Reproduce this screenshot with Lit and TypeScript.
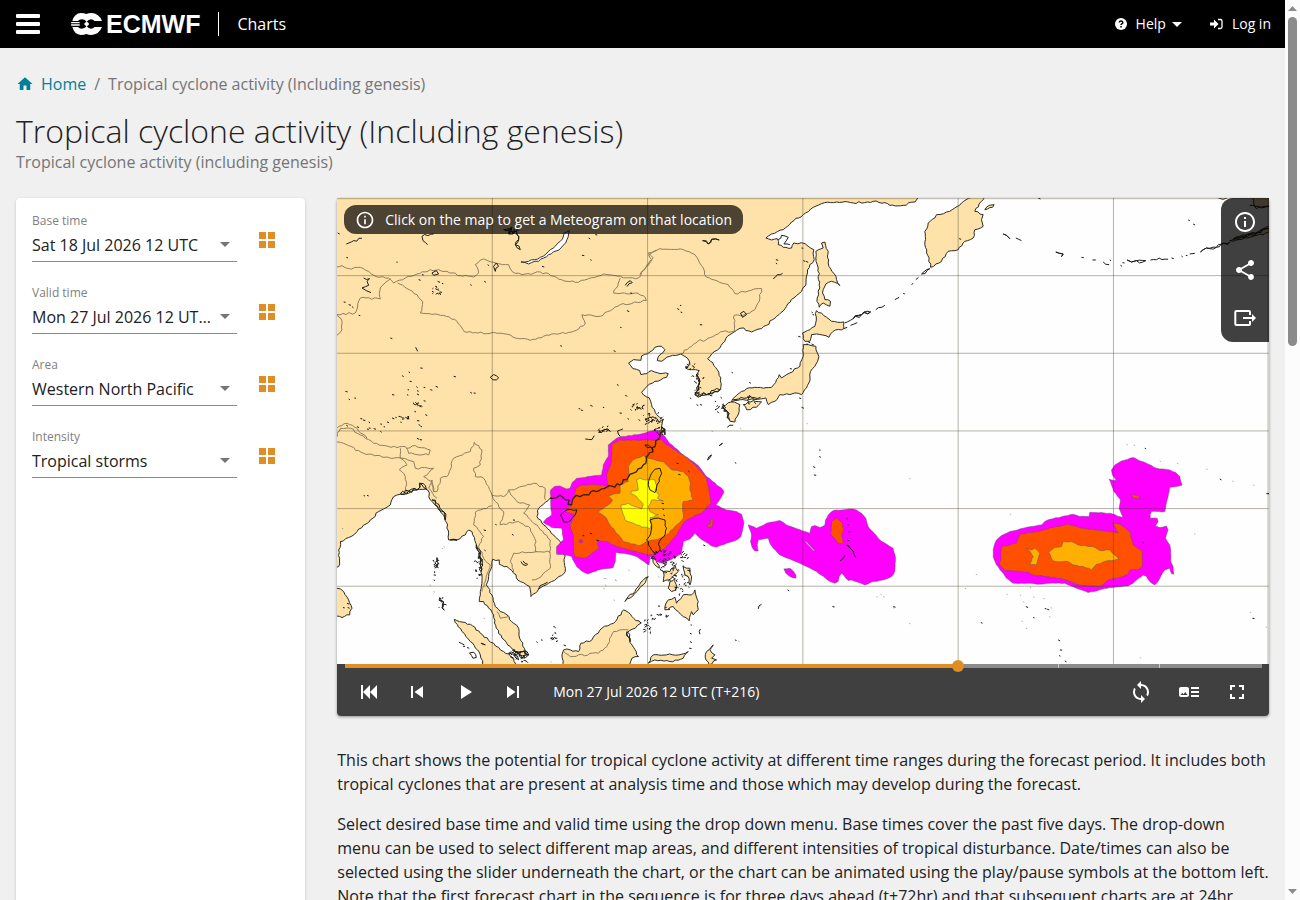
import { LitElement, html, css, svg } from "lit";
import { customElement, state } from "lit/decorators.js";

type Pt = [number, number];

/** Parses "x,y x,y" and moves it by the origin of its map sheet. */
const at = (dx: number, dy: number, s: string): Pt[] =>
  s.trim().split(/\s+/).map((p) => {
    const [x, y] = p.split(",").map(Number);
    return [x + dx, y + dy] as Pt;
  });

const noise = (a: number, b: number, c: number) => {
  const h = Math.sin(a * 12.9 + b * 7.3 + c * 78.2) * 43758.5;
  return (h - Math.floor(h) - 0.5) * 2;
};

/** Adds small deterministic irregularities between the points of a coast. */
const rough = (pts: Pt[], amp = 3, closed = true): string => {
  const out: string[] = [];
  const n = closed ? pts.length : pts.length - 1;
  for (let i = 0; i < n; i++) {
    const [x0, y0] = pts[i];
    const [x1, y1] = pts[(i + 1) % pts.length];
    const len = Math.hypot(x1 - x0, y1 - y0);
    out.push(`${x0},${y0}`);
    const k = len > 400 ? 0 : Math.floor(len / 8);
    for (let j = 1; j < k; j++) {
      const t = j / k;
      const r = noise(x0, y0, j) * amp;
      out.push(
        `${(x0 + (x1 - x0) * t - ((y1 - y0) / len) * r).toFixed(1)},${(y0 + (y1 - y0) * t + ((x1 - x0) / len) * r).toFixed(1)}`
      );
    }
  }
  if (!closed) out.push(pts[pts.length - 1].join(","));
  return "M" + out.join("L") + (closed ? "Z" : "");
};

/** Scatters n islets around each centre. */
const scatter = (centres: Pt[], n: number, rx: number, ry: number) =>
  centres
    .map(([x, y]) =>
      Array.from({ length: n }, (_, i) => {
        const px = x + noise(x, y, i) * rx;
        const py = y + noise(y, x, i + 5) * ry;
        return `M${px.toFixed(1)} ${py.toFixed(1)}l${(noise(px, py, 1) * 6).toFixed(1)} ${(noise(px, py, 2) * 5).toFixed(1)}l${(noise(px, py, 3) * 5).toFixed(1)} 2`;
      }).join("")
    )
    .join("");

const NE = [909, 0] as const;
const FE = [1839, 0] as const;
const SW = [0, 681] as const;
const SC = [609, 681] as const;
const SE = [1839, 681] as const;

const southChina = at(...SC, "375,12 362,22 360,35 345,65 325,90 310,120 280,145 240,180 200,187 170,200 130,210 100,220 95,240 84,238 88,225 60,210 30,220");

const mainland: Pt[] = [
  ...at(0, 0, "-9,-9"),
  ...at(...NE, "835,-9 825,12 790,22 750,22 735,14 700,10 640,15 590,12 545,17 520,28 490,50 455,72 430,95 395,108 378,120 395,126 412,122 415,140 430,148 455,150 462,135 485,134 505,145 522,155 523,185 510,200 503,225 498,262 485,280 462,300 440,325 410,355 380,382 365,392 335,402 318,398 312,390 290,397 270,410 255,430 240,450 215,468 203,482 212,490 232,515 243,540 242,575 225,582 195,592 175,598 165,590 175,575 178,550 170,530 178,518 155,515 137,510 150,500 142,480 122,468 90,475 65,490 52,488 60,470 75,455 65,445 45,448 30,462 5,474"),
  ...at(0, 0, "912,487 890,485 875,495 888,512 908,518 912,530 930,527"),
  ...at(...NE, "35,518 60,527 85,527 80,538 45,550 15,572 5,583 28,600 35,620 50,650 68,665 65,690"),
  ...southChina,
  ...at(...SW, "625,232 605,250 600,275 620,300 650,330 670,350 682,385 685,440 660,460 635,475 605,492 582,515 578,485 550,470 530,445 510,425 487,418 487,405 467,403 465,425 455,455 448,480 465,510 475,545 490,560 510,570 530,595 545,610 548,640 562,670 568,690 545,690 520,665 495,640 478,610 470,570 455,550 440,530 427,530 430,500 435,450 430,400 420,365 405,320 395,315 385,330 360,345 335,345 332,300 320,270 300,245 280,225 272,195 240,195 215,205 190,208 170,215 160,240 125,260 100,285 60,320 35,338 10,350 5,375 8,400 5,425 -9,430"),
];

const taiwan = at(...SC, "325,180 335,145 345,133 360,130 365,145 358,170 345,203 330,195");
const luzon = at(...SC, "330,285 345,280 375,285 380,310 372,335 358,350 360,375 345,385 335,375 320,345 328,335 335,300");
const hainan = at(...SW, "670,270 690,255 720,255 715,270 700,288 680,291");

const islands: Pt[][] = [
  taiwan,
  luzon,
  hainan,
  at(...SW, "-9,485 10,492 20,500 35,525 45,550 38,570 15,578 -9,572"),
  at(...SW, "352,583 400,598 430,625 470,655 500,680 530,700 545,735 445,735 430,690 400,650 375,620"),
  at(...SW, "675,690 680,675 700,675 725,680 732,655 765,645 795,610 830,595 860,555 885,575 912,595 895,610 870,625 885,660 905,695 885,700 870,735 680,735"),
  at(...SC, "325,715 340,690 380,690 425,688 445,680 430,700 390,710 345,705"),
  at(...SC, "500,680 520,660 510,675 525,690 515,700 530,705 508,720 498,705"),
  at(...SC, "375,545 385,525 405,517 410,535 430,510 455,510 465,495 475,530 475,555 460,570 455,560 448,588 430,575 415,560 400,545 375,555"),
  at(...SC, "430,425 450,430 455,455 450,480 445,455 435,450"),
  at(...SC, "370,440 390,440 405,420 415,440 395,460 370,470"),
  at(...SC, "390,470 405,460 410,490 395,500 385,490"),
  at(...SC, "335,395 350,405 358,430 345,420"),
  at(...SC, "255,530 265,515 285,500 315,460 325,455 310,480 285,505"),
  at(...NE, "490,440 505,440 528,445 537,475 525,505 512,520 507,555 500,570 485,590 465,585 450,590 420,590 405,610 385,620 378,600 345,605 310,605 275,612 285,597 320,572 395,568 410,545 418,530 425,540 450,525 480,505 490,475"),
  at(...NE, "310,620 340,608 365,612 350,628 320,635"),
  at(...NE, "248,625 275,612 300,620 298,640 285,672 270,670 262,640"),
  at(...NE, "530,338 545,345 575,370 612,372 612,392 580,400 567,418 530,408 515,410 510,430 495,430 488,405 510,395 525,385"),
  at(...NE, "545,135 555,132 565,160 565,195 590,245 600,263 575,250 558,258 548,285 555,305 572,310 570,325 550,315 538,328 532,300 540,270 535,210 528,180 528,160 550,150"),
  at(...NE, "855,100 865,75 885,60 890,50 920,42 945,30 965,15 1000,-9 1040,-9 1030,5 1005,40 1030,50 1025,65 1030,85 1005,95 1000,120 975,130 955,155 925,160 905,190 872,208 868,180 855,140"),
  at(...FE, "905,-9 970,-9 970,30 945,25 920,32 912,15"),
  at(...FE, "795,-9 840,-9 820,4"),
  at(...FE, "840,128 870,115 920,105 957,85 970,100 900,118 860,126"),
  at(...FE, "105,35 118,22 133,20 128,28"),
];

const baikal = at(0, 0, "552,192 575,190 610,178 640,155 670,130 682,105 697,98 690,125 672,150 635,170 605,190 575,198");

const borders: Pt[][] = [
  at(0, 0, "-9,212 15,203 35,212 70,208 95,220 120,237 155,240 170,255 205,240 240,228 280,215 330,220 370,233 410,237 425,225 415,200 440,183 470,193 515,200 525,220 555,230 610,222 650,235 690,250 715,253 760,240 800,228 830,232 860,240 905,240 920,215 945,185 935,170 960,157"),
  at(0, 0, "182,255 210,272 240,290 257,310 250,345 320,352 360,370 383,402 505,408 545,422 580,427 620,415 710,400 745,378 735,350 790,355 850,320 928,308 925,298 895,285 830,285 850,240"),
  at(0, 0, "160,243 130,270 130,303 70,300 55,345 0,350 15,370 15,395 -5,415"),
  at(...NE, "0,230 20,205 40,180 25,165 60,152 130,155 165,170 190,210 200,238 265,260 285,287 365,272 360,300 345,335 310,352 283,352 283,400 250,400 190,430 180,425 122,468"),
  at(...SW, "-5,40 10,10 40,10 70,30 110,55 180,68 205,65 215,85 275,90 280,75 235,62 210,70"),
  at(...SW, "-5,45 80,85 160,100 195,100 230,110 235,130 290,130 260,155 285,170 290,200"),
  at(...SW, "0,10 30,-5 60,10 90,40"),
  at(...SW, "190,70 190,100 210,120 187,135 205,155 208,205"),
  at(...SW, "300,220 275,190 285,165 290,200 300,200 310,160 330,155 350,100 400,80 412,52 435,75 430,120 410,130 415,155 440,160 455,185 465,210 500,215 515,195 540,190 590,175 625,190 625,225"),
  at(...SW, "465,243 415,262 410,300 440,335 425,365 440,400 460,420 435,500"),
  at(...SW, "465,210 475,230 500,260 490,300 545,290 580,310 597,350 595,380 640,382"),
  at(...SW, "515,195 540,230 578,240 560,265 600,300 640,345 640,430 605,460 585,465"),
  at(...SW, "530,445 520,410 530,385 600,380"),
  at(...SW, "680,680 700,695 785,685 810,665 830,620 875,615"),
  at(...SW, "480,560 490,580 515,575"),
];

const magenta: Pt[][] = [
  at(...SC, "230,40 240,36 300,28 345,15 362,20 375,35 385,50 430,90 475,122 500,155 550,195 552,203 545,215 528,240 560,255 590,260 605,268 612,295 603,335 590,345 560,355 530,367 515,363 495,350 480,340 465,325 450,342 430,350 425,385 400,400 370,415 350,410 330,395 327,420 290,395 260,387 228,382 226,410 220,428 175,435 143,447 125,438 110,425 95,395 75,390 50,388 50,365 70,345 65,310 35,308 10,292 20,280 35,270 32,230 32,195 45,184 60,183 80,192 90,190 97,172 110,160 185,150 190,120 205,95 205,60"),
  at(...SC, "625,300 635,303 650,310 680,295 720,287 740,300 810,325 815,305 825,302 840,308 855,300 857,285 865,270 880,257 930,252 950,255 965,265 978,280 985,305 1020,345 1060,370 1067,400 1065,440 1055,455 1030,465 1000,470 975,480 955,472 935,465 925,467 905,445 898,455 895,470 885,475 870,470 830,440 780,415 720,390 700,370 690,355 685,340 655,345 652,360 655,378 645,378 638,370 632,350 635,330"),
  at(...SC, "732,432 750,430 760,438 768,450 768,460 750,455 738,445"),
  at(...SE, "130,375 133,362 140,345 155,332 180,320 220,310 275,300 285,290 300,283 370,268 390,275 418,275 420,262 480,265 520,278 508,250 512,225 492,200 485,180 478,163 500,167 488,150 485,135 495,120 515,108 550,98 590,115 620,130 640,132 660,135 678,143 690,155 697,180 680,185 660,187 655,215 645,260 605,260 601,270 602,280 622,280 625,290 617,303 630,308 650,303 655,315 647,340 660,360 663,375 663,410 670,425 672,448 665,446 660,430 645,435 635,450 625,470 615,480 600,470 590,455 580,450 560,465 550,475 535,483 480,488 415,503 380,490 345,475 300,475 270,478 240,475 190,475 170,460 155,440 140,420 130,395"),
];
const red: Pt[][] = [
  at(...SC, "215,60 240,45 330,45 365,45 380,60 430,90 470,125 500,160 508,200 513,235 490,260 450,280 430,295 410,330 375,370 350,385 325,390 290,380 230,365 200,350 170,345 178,370 150,390 135,400 105,395 100,370 100,330 90,300 105,270 75,260 95,240 108,190 125,180 190,180 205,190 200,150 215,110"),
  at(...SC, "500,300 511,298 513,280 519,282 517,305 503,307"),
  at(...SC, "875,290 890,280 908,295 910,320 905,330 910,357 895,355 872,325"),
  at(...SE, "155,365 200,355 210,328 280,315 350,298 400,310 505,323 488,293 510,297 540,320 550,360 578,380 577,425 565,435 540,435 535,448 520,455 475,465 450,485 390,480 330,460 250,450 235,441 165,437 150,420 153,395"),
  at(...SE, "545,207 565,212 572,222 550,220"),
];
const orange: Pt[][] = [
  at(...SC, "265,125 275,110 290,100 310,92 340,103 370,110 395,135 430,140 445,155 452,175 450,195 460,225 430,230 430,280 410,300 380,330 345,345 320,350 300,362 250,350 230,325 210,300 200,280 175,262 205,240 218,225 205,212 240,205 240,180 265,170"),
  at(...SE, "297,383 315,367 335,365 340,350 365,350 385,360 430,365 450,377 480,375 507,402 495,405 470,408 440,418 425,435 400,425 370,420 355,410 310,408"),
  at(...SE, "230,370 245,375 255,370 270,385 265,400 260,420 240,418 250,395 240,378"),
];
const yellow: Pt[][] = [
  at(...SC, "290,165 300,160 320,165 345,165 352,185 345,195 358,210 352,220 370,228 335,225 325,245 330,260 355,270 330,278 335,295 330,312 290,300 255,285 248,262 243,240 265,235 285,245 305,252 310,238 290,215 272,205 275,198 295,195"),
];

const strokes: Pt[][] = [
  at(0, 0, "28,138 50,128 75,121"),
  at(0, 0, "290,108 255,115 258,128 272,140"),
  at(0, 0, "80,240 98,242 90,250 95,262 75,270 88,278 102,284"),
  at(0, 0, "285,225 298,218 305,228 290,232 285,225"),
  at(0, 0, "470,205 478,195 485,205 475,220 470,205"),
  at(0, 0, "460,538 470,530 485,540 478,546 460,538"),
  at(0, 0, "865,262 880,248 886,254 870,266"),
  at(0, 0, "236,448 242,460"),
  at(...NE, "400,242 412,230 428,226"),
  at(...NE, "302,346 312,340 320,350 308,358 302,346"),
  at(...NE, "415,125 425,112 445,118 432,138 450,140"),
  at(...NE, "615,375 640,362 665,350 692,342"),
  at(...NE, "612,392 622,388"),
  at(...NE, "632,382 652,374"),
  at(...NE, "708,335 735,322"),
  at(...NE, "765,305 778,298"),
  at(...NE, "815,260 820,256"),
  at(...NE, "828,245 836,238"),
  at(...NE, "225,636 240,625"),
  at(...NE, "262,688 280,682"),
  at(...NE, "280,605 320,600 362,598"),
  at(...FE, "198,120 215,128"),
  at(...FE, "428,186 438,186"),
  at(...FE, "460,192 478,200"),
  at(...FE, "602,186 628,180 655,184"),
  at(...FE, "720,168 735,166"),
  at(...FE, "900,22 935,30 957,24"),
  at(...SW, "745,42 765,44 772,32"),
  at(...SW, "850,35 842,18 858,12"),
  at(...SW, "366,652 382,660"),
  at(...SW, "398,684 410,682 418,698 408,700 398,684"),
  at(...SW, "552,410 568,422 572,418 558,408"),
  at(...SW, "605,492 620,478 632,472"),
  at(...SC, "655,552 665,538"),
  at(...SC, "480,628 482,612"),
  at(...SC, "900,408 915,390"),
  at(...SC, "920,360 940,378 948,398"),
];

/** Dense coasts and archipelagos, traced twice so that they read as broken ground. */
const dense: Pt[][] = [
  at(0, 0, "500,95 525,88 515,108 538,100 545,125 535,140 550,155"),
  at(...NE, "188,128 205,138 215,124 238,126"),
  at(...NE, "640,362 665,350 692,342"),
  at(...NE, "845,228 870,212"),
  at(...NE, "165,590 200,590 240,575"),
  at(...NE, "170,530 180,550 172,580"),
  at(...NE, "248,625 262,640 268,665"),
  at(...FE, "160,108 170,112 180,122"),
  at(...FE, "318,162 340,168 335,176"),
  at(...FE, "532,186 545,192 560,188 588,188"),
  at(...FE, "752,162 770,150 800,148 840,132"),
  at(...FE, "850,124 900,110 957,92"),
  at(...SW, "785,22 800,15 812,12 820,20"),
  at(...SW, "190,206 215,198 240,195 248,175 268,192"),
  at(...SW, "300,398 295,430"),
  at(...SW, "308,518 318,540 322,556"),
  at(...SW, "432,655 445,660"),
  at(...SW, "515,685 540,680 555,700 575,690 560,680 530,690 545,705"),
  at(...SW, "285,225 320,260 325,285"),
  at(...SW, "418,360 430,400 432,440"),
  at(...SW, "340,345 360,346"),
  at(...SW, "870,620 880,650"),
  at(...SC, "503,105 515,90"),
  at(...SC, "538,62 548,55"),
  at(...SC, "315,60 340,75"),
  at(...SC, "365,5 375,30"),
];

const specks: Pt[] = [
  ...at(0, 0, "178,192 28,178 2,105 735,172 760,185 755,120 775,110 615,205 452,200 255,230 245,245 302,250 315,256 285,280 295,272 308,282 400,260 442,250 20,312 35,320 45,326 65,352 160,420 870,338 850,388 670,443 830,458 250,510 215,522 195,533 218,550 350,535 238,566 260,568 280,575 296,565 212,575 240,578 240,588 165,590 210,590 400,583 410,585 25,580 35,603 52,600 260,608 230,618 238,620 232,640 265,650 240,668 245,680 250,684 70,662 78,666 95,672 130,678 150,672 165,660 175,658 190,656 205,658 210,662 190,672 28,682 95,690 110,692 130,700 725,632 732,636 760,622 798,628 840,560 865,592 848,645 872,662 905,665 880,285"),
  ...at(...NE, "408,185 408,195 485,150 490,188 498,190 120,322 122,342 112,332 180,380 275,523 328,553 450,512 475,415 515,342 518,350 505,432 515,438 500,438 790,286 5,630 70,695 150,600 170,620 180,620 210,592 242,598 248,622 478,600 485,628 225,610"),
  ...at(...FE, "715,66 730,78 395,178 480,186 512,202 518,194 665,180 695,174 708,172 28,122 265,0"),
  ...at(...SW, "80,212 90,211 240,40 248,44 475,298 525,328 528,285 440,315 442,375 18,548 32,548 30,535 140,5 90,12 60,5 290,450 290,465 305,525 378,664 390,668 598,650 612,645 640,640 680,660"),
  ...at(...SC, "838,75 838,95 820,125 822,150 585,113 743,495 878,545 1060,545 920,280 922,300 925,320 922,345 924,365 585,645 490,360 365,235 368,252 370,270 410,115 415,148 445,138 128,332 150,325 170,345 452,600 450,625 450,650 448,670"),
  ...at(...SE, "585,70 810,162 950,206 953,205 578,352 285,551 292,553 228,545 250,578 93,593 325,645 330,675 328,692 345,708 908,580"),
];
const faint: Pt[] = [
  ...at(...SE, "530,58 552,60 630,108 682,115 770,132 848,168 733,326 910,180 180,267 45,490 78,448 240,487 210,510 170,508 250,516 220,530 280,520 298,575 303,548 228,610 215,588 900,562 948,606 570,698"),
  ...at(...SC, "1010,515 1030,515 1022,508 1108,595 1060,548 878,545 595,648 515,18 225,465 190,490 195,460 195,480 800,-5 1108,160 265,435 355,455 600,10"),
  ...at(...SW, "315,370 320,365 278,480 290,500 640,710 835,465 800,460 15,310 440,580 830,525"),
];

const lines = (set: Pt[][], amp: number, closed = true) => set.map((p) => rough(p, amp, closed)).join("");

const chart = svg`
  <rect width="2796" height="1398" fill="#fefefe"/>
  <g stroke-linejoin="round">
    <path class="land" d=${rough(mainland, 3)}/>
    <path class="land" d=${lines(islands, 3)}/>
    <path class="lake" d=${rough(baikal, 3)}/>
    <path class="border" d=${lines(borders, 3, false)}/>
    <path fill="#ff00ff" class="contour" d=${lines(magenta, 1)}/>
    <path fill="#ff5000" class="contour" d=${lines(red, 1.5)}/>
    <path fill="#ffaf00" class="contour" d=${lines(orange, 2)}/>
    <path fill="#ffff00" class="contour" d=${lines(yellow, 2)}/>
    <path fill="#ff00ff" class="contour" d="M727 1026h9v8h-9z"/>
    <path fill="#ffffff" class="contour" d="M1403 1030l6 2 26 28-6-2z"/>
    <path class="over" d=${rough(southChina, 6, false)}/>
    <path class="isles" d=${lines([taiwan, luzon, hainan], 3)}/>
    <path class="isles" d=${lines(strokes, 4, false)}/>
    <path class="isles" d=${lines(dense, 7, false) + lines(dense.map((p) => p.slice().reverse()), 6, false)}/>
    <path class="isles" d=${scatter(at(...SC, "355,392 395,390 420,398 385,420"), 12, 22, 14)}/>
    <path class="isles" d=${scatter(at(...SC, "380,435 400,455 430,470 430,440 320,600 345,578 420,490 375,560"), 7, 20, 16)}/>
    <path class="isles" d=${scatter(at(...SW, "297,420 425,400 425,440 313,535 655,628 560,690 530,690 935,600"), 8, 8, 20)}/>
    <path class="isles" d=${scatter(at(...NE, "170,580 175,540 150,500 240,630 330,605 40,655 60,665 55,700 25,660"), 8, 14, 12)}/>
    <path class="isles" d=${scatter(at(0, 0, "895,628 905,625 938,668 800,692 525,100 295,278 200,660 240,618"), 7, 14, 9)}/>
    <path class="isles" d=${specks.map(([x, y], i) => `M${x} ${y}l${4 + (i % 4)} ${(i % 3) + 1}`).join("")}/>
    <path class="isles faint" d=${faint.map(([x, y]) => `M${x} ${y}l4 2`).join("")}/>
  </g>
  <path class="grid" d="M466 0V1398M932 0V1398M1398 0V1398M1864 0V1398M2330 0V1398M2794 0V1398M0 2H2796M0 233H2796M0 466H2796M0 699H2796M0 932H2796M0 1165H2796"/>`;

const icons = {
  home: "M10 20v-6h4v6h5v-8h3L12 3 2 12h3v8z",
  first: "M4 5h2v14H4zM13 5v14L6 12zM20 5v14l-7-7z",
  prev: "M6 6h2v12H6zm3.5 6l8.5 6V6z",
  play: "M8 5v14l11-7z",
  next: "M6 18l8.500-6L6 6v12zM16 6v12h2V6z",
  sync: "M12 4V1L8 5l4 4V6c3.310 0 6 2.690 6 6 0 1.010-.25 1.970-.7 2.800l1.460 1.460C19.540 15.030 20 13.570 20 12c0-4.420-3.580-8-8-8zm0 14c-3.310 0-6-2.690-6-6 0-1.010.25-1.970.7-2.800L5.240 7.740C4.460 8.970 4 10.430 4 12c0 4.420 3.580 8 8 8v3l4-4-4-4v3z",
  legend: "M22 13h-8v-2h8v2zm0-6h-8v2h8V7zm-8 10h8v-2h-8v2zm-2-8v6c0 1.100-.9 2-2 2H4c-1.100 0-2-.9-2-2V9c0-1.100.9-2 2-2h6c1.100 0 2 .9 2 2zm-1.500 6l-2.250-3-1.750 2.260-1.250-1.510L3.500 15h7z",
  full: "M7 14H5v5h5v-2H7v-3zm-2-4h2V7h3V5H5v5zm12 7h-3v2h5v-5h-2v3zM14 5v2h3v3h2V5h-5z",
  info: "M11 7h2v2h-2zm0 4h2v6h-2zm1-9C6.480 2 2 6.480 2 12s4.480 10 10 10 10-4.480 10-10S17.520 2 12 2zm0 18c-4.410 0-8-3.590-8-8s3.590-8 8-8 8 3.590 8 8-3.590 8-8 8z",
  share: "M18 16.080c-.76 0-1.440.3-1.960.77L8.910 12.700c.05-.23.09-.46.09-.7s-.04-.47-.09-.7l7.050-4.110c.54.5 1.250.81 2.040.81 1.660 0 3-1.340 3-3s-1.340-3-3-3-3 1.340-3 3c0 .24.04.47.09.7L8.040 9.810C7.500 9.310 6.790 9 6 9c-1.660 0-3 1.340-3 3s1.340 3 3 3c.79 0 1.500-.31 2.040-.81l7.120 4.160c-.05.21-.08.43-.08.65 0 1.610 1.310 2.920 2.920 2.920s2.920-1.310 2.920-2.920-1.310-2.920-2.920-2.920z",
  exit: "M3 4h13a2 2 0 0 1 2 2v3h-2V6H3.300v12H16v-3h2v3a2 2 0 0 1-2 2H3.300a2 2 0 0 1-2-2V6a2 2 0 0 1 2-2zM10 11h9V8l4 4-4 4v-3h-9z",
  tiles: "M4 4h7v7H4zM13 4h7v7h-7zM4 13h7v7H4zM13 13h7v7h-7z",
};
const icon = (name: keyof typeof icons, size = 24) =>
  html`<svg width=${size} height=${size} viewBox="0 0 24 24" fill="currentColor" aria-hidden="true"><path d=${icons[name]} /></svg>`;

@customElement("app-root")
export class AppRoot extends LitElement {
  @state() private step = 6;

  private fields = [
    { id: "base", label: "Base time", value: "Sat 18 Jul 2026 12 UTC" },
    { id: "valid", label: "Valid time", value: "Mon 27 Jul 2026 12 UTC (T+216)" },
    { id: "area", label: "Area", value: "Western North Pacific" },
    { id: "intensity", label: "Intensity", value: "Tropical storms" },
  ];

  static styles = css`
    :host {
      display: grid;
      grid-template-columns: minmax(0, 1fr) 15px;
      height: 100vh;
      overflow: hidden;
      background: #f0f0f0;
      color: #212121;
      font: 16px/24px "Open Sans", "Noto Sans", sans-serif;
    }
    * { box-sizing: border-box; }
    svg { display: block; flex: none; }
    h1, p { margin: 0; }
    button {
      display: grid;
      place-items: center;
      border: 0;
      padding: 0;
      background: none;
      color: inherit;
      font: inherit;
      cursor: pointer;
    }
    a { text-decoration: none; color: inherit; }
    .page { min-width: 0; height: 100vh; overflow: hidden; }
    .top {
      display: flex;
      align-items: center;
      height: 48px;
      padding: 0 14px 0 16px;
      background: #000;
      color: #fff;
    }
    .logo { display: flex; align-items: center; gap: 4px; margin-left: 31px; }
    .word { font: bold 25px/24px "Liberation Sans", Arial, sans-serif; }
    .product { margin-left: 18px; padding-left: 18px; border-left: 1px solid #fff; }
    .user { display: flex; align-items: center; gap: 28px; margin-left: auto; font-size: 14px; }
    .user > * { display: flex; align-items: center; }
    .user .name { margin: 0 6px 0 9px; }
    .user .last { margin: 0 0 0 9px; }
    .crumbs { display: flex; align-items: center; padding: 24px 16px 0; color: #757575; }
    .crumbs a { display: flex; align-items: center; gap: 7px; color: #007f99; }
    .crumbs .sep { margin: 0 8px; }
    .head { padding: 16px 16px 0; }
    h1 { font-size: 32px; line-height: 38px; font-weight: 300; }
    .head p { color: #757575; }
    .cols { display: grid; grid-template-columns: minmax(0, 1fr) minmax(0, 3fr); padding-top: 24px; }
    .col { display: flex; flex-direction: column; padding: 0 16px; min-width: 0; }
    .card {
      flex: 1;
      padding: 6px 16px;
      border-radius: 4px;
      background: #fff;
      box-shadow: 0 1px 3px rgba(0, 0, 0, 0.2);
    }
    .field { display: flex; align-items: center; gap: 8px; height: 72px; }
    .box { flex: 1; min-width: 0; padding-bottom: 6px; }
    .box label { display: block; font-size: 12px; line-height: 16px; color: #808080; }
    .pick { display: grid; border-bottom: 1px solid #8a8a8a; }
    .pick > * { grid-area: 1 / 1; }
    select {
      width: 100%;
      height: 32px;
      padding: 0 24px 0 0;
      border: 0;
      appearance: none;
      background: none;
      color: #212121;
      font: inherit;
      text-overflow: ellipsis;
      white-space: nowrap;
      overflow: hidden;
    }
    .pick svg { align-self: center; justify-self: end; margin-right: 7px; color: #757575; pointer-events: none; }
    .field button { width: 44px; height: 44px; color: #e08e23; }
    .viewer { position: relative; border-radius: 4px; box-shadow: 0 1px 3px rgba(0, 0, 0, 0.4); }
    .map { width: 100%; height: auto; }
    .land { fill: #fee2aa; stroke: #2b2b22; stroke-width: 3; }
    .lake { fill: #fff; stroke: #333; stroke-width: 3; }
    .border { fill: none; stroke: #8f7c5c; stroke-width: 3; }
    .contour { stroke: #5a4a78; stroke-opacity: 0.7; stroke-width: 2; }
    .over { fill: none; stroke: #33220c; stroke-width: 4; }
    .isles { fill: none; stroke: #1c1c18; stroke-width: 3; }
    .faint { stroke-opacity: 0.35; }
    .grid { fill: none; stroke: #40341e; stroke-opacity: 0.38; stroke-width: 3; }
    .hint {
      position: absolute;
      top: 7px;
      left: 7px;
      display: flex;
      align-items: center;
      gap: 10px;
      height: 29px;
      padding: 0 11px;
      border-radius: 12px;
      background: rgba(0, 0, 0, 0.7);
      color: #fff;
      font-size: 14px;
    }
    .tools {
      position: absolute;
      top: 0;
      right: 0;
      border-radius: 12px 0 0 12px;
      background: rgba(0, 0, 0, 0.75);
      color: #fff;
    }
    .tools button, .bar button { width: 48px; height: 48px; }
    .controls { background: #404040; color: #fff; border-radius: 0 0 4px 4px; }
    input[type="range"] {
      display: block;
      width: calc(100% - 10px);
      height: 4px;
      margin: 0 2px 0 8px;
      appearance: none;
      background: none;
    }
    input::-webkit-slider-runnable-track { height: 4px; background: var(--track); }
    input::-webkit-slider-thumb {
      appearance: none;
      width: 12px;
      height: 12px;
      margin-top: -4px;
      border-radius: 50%;
      background: #e08e23;
    }
    .bar { display: flex; align-items: center; padding: 0 8px; }
    .when { flex: 1; padding-left: 16px; font-size: 14px; }
    .text { display: grid; gap: 16px; padding-top: 32px; }
    .scroll {
      display: flex;
      flex-direction: column;
      align-items: center;
      justify-content: space-between;
      padding: 6px 0;
      background: #fcfcfc;
      color: #8b8b8b;
    }
    .thumb { width: 9px; height: 37%; margin: 6px 0 auto; border-radius: 5px; background: #8b8b8b; }
  `;

  render() {
    const done = (this.step / 9) * 98.7 + 0.7;
    const fill = `linear-gradient(90deg, #e08e23 ${done}%, transparent ${done}%), linear-gradient(90deg, transparent 77.300%, #ccc 77.300% 77.400%, transparent 77.400% 88.300%, #ccc 88.300% 88.400%, transparent 88.400%), linear-gradient(90deg, #8b8b8b 99.450%, transparent 99.450%)`;
    return html`
      <div class="page">
        <header class="top">
          <button aria-label="Menu">
            <svg width="24" height="20" viewBox="0 0 24 20" fill="#fff"><rect width="24" height="4" rx="1" /><rect y="8" width="24" height="4" rx="1" /><rect y="16" width="24" height="4" rx="1" /></svg>
          </button>
          <a class="logo" href="#">
            <svg width="31" height="22" viewBox="0 0 93 66" aria-hidden="true">
              <path fill="#fff" d="M30 0Q39 0 46 3Q53 0 61 0Q84 1 93 24H71Q66 19 60 19Q52 20 47 26Q41 19 32 19Q25 19 21 24H4Q10 1 30 0ZM1 27H26V31H0ZM0 34H26V38H1ZM4 42H21Q25 47 32 47Q41 47 47 40Q52 47 60 47Q66 47 71 42H93Q84 65 61 66Q53 66 46 63Q39 66 30 66Q10 65 4 42ZM47 25L55 33L47 41L39 33Z" />
            </svg>
            <span class="word">ECMWF</span>
          </a>
          <span class="product">Charts</span>
          <nav class="user">
            <button>
              <svg width="12" height="12" viewBox="0 0 12 12" aria-hidden="true"><circle cx="6" cy="6" r="6" fill="#fff" /><path d="M4.200 4.500Q4.400 2.900 6 2.900T7.800 4.400Q7.800 5.300 6.800 5.800Q6 6.200 6 7.100M6 8.100V9.500" fill="none" stroke="#000" stroke-width="1.500" /></svg>
              <span class="name">Help</span>
              <svg width="10" height="5" viewBox="0 0 10 5" fill="#fff" aria-hidden="true"><path d="M0 0h10L5 5z" /></svg>
            </button>
            <a href="#">
              <svg width="13" height="12" viewBox="0 0 13 12" aria-hidden="true"><path fill="#fff" d="M0 4.500h4V1.500L8.500 6 4 10.500V7.500H0z" /><path d="M8 1.500h2.500a1.500 1.500 0 0 1 1.500 1.500v6a1.500 1.500 0 0 1-1.500 1.500H8" fill="none" stroke="#fff" stroke-width="1.300" /></svg>
              <span class="last">Log in</span>
            </a>
          </nav>
        </header>

        <nav class="crumbs" aria-label="Breadcrumb">
          <a href="#">${icon("home", 18)}<span>Home</span></a>
          <span class="sep">/</span><span>Tropical cyclone activity (Including genesis)</span>
        </nav>
        <div class="head">
          <h1>Tropical cyclone activity (Including genesis)</h1>
          <p>Tropical cyclone activity (including genesis)</p>
        </div>

        <main class="cols">
          <div class="col">
            <form class="card">
              ${this.fields.map(
                (f) => html`<div class="field">
                  <div class="box">
                    <label for=${f.id}>${f.label}</label>
                    <div class="pick">
                      <select id=${f.id}><option>${f.value}</option></select>
                      <svg width="10" height="5" viewBox="0 0 10 5" fill="currentColor" aria-hidden="true"><path d="M0 0h10L5 5z" /></svg>
                    </div>
                  </div>
                  <button type="button" aria-label=${"All values of " + f.label}>${icon("tiles")}</button>
                </div>`
              )}
            </form>
          </div>
          <div class="col">
            <section class="viewer">
              <svg class="map" viewBox="0 0 2796 1398" role="img" aria-label="Forecast map">${chart}</svg>
              <div class="hint">${icon("info", 20)}<span>Click on the map to get a Meteogram on that location</span></div>
              <div class="tools">
                <button aria-label="Information">${icon("info")}</button>
                <button aria-label="Share">${icon("share")}</button>
                <button aria-label="Export">${icon("exit")}</button>
              </div>
              <div class="controls">
                <input type="range" min="0" max="9" aria-label="Forecast step" style="--track: ${fill}" .value=${String(this.step)}
                  @input=${(e: Event) => (this.step = Number((e.target as HTMLInputElement).value))} />
                <div class="bar">
                  <button aria-label="First">${icon("first")}</button>
                  <button aria-label="Previous">${icon("prev")}</button>
                  <button aria-label="Play">${icon("play")}</button>
                  <button aria-label="Next">${icon("next")}</button>
                  <span class="when">Mon 27 Jul 2026 12 UTC (T+216)</span>
                  <button aria-label="Loop">${icon("sync")}</button>
                  <button aria-label="Legend">${icon("legend")}</button>
                  <button aria-label="Full screen">${icon("full")}</button>
                </div>
              </div>
            </section>
            <div class="text">
              <p>This chart shows the potential for tropical cyclone activity at different time ranges during the forecast period. It includes both tropical cyclones that are present at analysis time and those which may develop during the forecast.</p>
              <p>Select desired base time and valid time using the drop down menu. Base times cover the past five days. The drop-down menu can be used to select different map areas, and different intensities of tropical disturbance. Date/times can also be selected using the slider underneath the chart, or the chart can be animated using the play/pause symbols at the bottom left. Note that the first forecast chart in the sequence is for three days ahead (t+72hr) and that subsequent charts are at 24hr</p>
            </div>
          </div>
        </main>
      </div>
      <div class="scroll" aria-hidden="true">
        <svg width="9" height="5" viewBox="0 0 9 5" fill="currentColor"><path d="M0 5L4.500 0 9 5z" /></svg>
        <div class="thumb"></div>
        <svg width="9" height="5" viewBox="0 0 9 5" fill="currentColor"><path d="M0 0h9L4.500 5z" /></svg>
      </div>
    `;
  }
}
